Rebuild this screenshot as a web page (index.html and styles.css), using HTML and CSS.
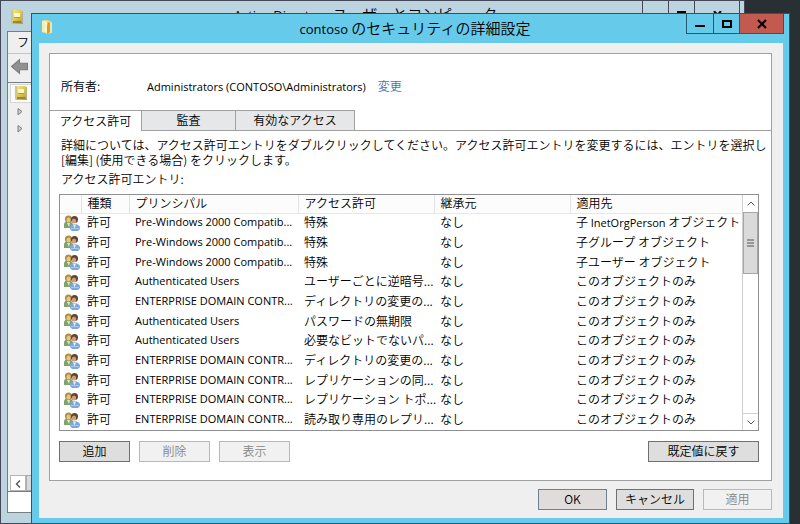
FILE: index.html
```html
<!DOCTYPE html>
<html lang="ja">
<head>
<meta charset="utf-8">
<title>contoso のセキュリティの詳細設定</title>
<link rel="stylesheet" href="styles.css">
</head>
<body>
<svg class="defs" aria-hidden="true">
  <defs>
    <linearGradient id="gold" x1="0" y1="0" x2="1" y2="1">
      <stop offset="0" stop-color="#f4eaa0"/><stop offset=".5" stop-color="#dcc84c"/><stop offset="1" stop-color="#b09c34"/>
    </linearGradient>
  </defs>
  <symbol id="book" viewBox="0 0 14 16">
    <path d="M1 1h10l2 1v13H2l-1-1z" fill="url(#gold)"/>
    <path d="M2 12h9l1 2H3z" fill="#9a8828"/>
    <path d="M1 1h2v13H1z" fill="#d3c67e"/>
    <path d="M4 4h6v4H4z" fill="#fbf6c8"/>
    <path d="M4 8h6v1H4z" fill="#b49e35"/>
    <path d="M12 2h1v12h-1z" fill="#b7b08a"/>
  </symbol>
  <symbol id="users" viewBox="0 0 16 16">
    <path d="M0 13V9q1-3 4-3t5 3v4z" fill="#7fa36a"/>
    <path d="M3 8h3l-1 4z" fill="#dfe8cf"/>
    <circle cx="4.500" cy="4" r="3.600" fill="#b08f3e"/>
    <ellipse cx="4.500" cy="5" rx="2" ry="2.500" fill="#e6c48e"/>
    <circle cx="10.500" cy="4.500" r="3.500" fill="#5d4436"/>
    <ellipse cx="10" cy="6" rx="2.200" ry="2.600" fill="#d59a78"/>
    <path d="M6 14v-2q1-3 4.500-3T16 12v2l-2 2H8z" fill="#7ea8dc"/>
    <path d="M9 9.500h3l-1.500 4z" fill="#e3eefa"/>
    <path d="M7 13h8v1H7z" fill="#a9c8ec"/>
  </symbol>
</svg>

<section class="window console">
  <header class="console-title">
    <svg class="console-icon"><use href="#book"/></svg>
    <span class="console-caption"><span class="latin">Active Directory</span> ユーザーとコンピューター</span>
    <div class="console-controls">
      <button aria-label="最小化"></button>
      <button aria-label="最大化"><svg viewBox="0 0 10 8"><path d="M1 1h7v6H1z" fill="none" stroke="#000" stroke-width="2"/></svg></button>
      <button aria-label="閉じる"><svg viewBox="0 0 10 8"><path d="M1 0l7 8M8 0L1 8" fill="none" stroke="#000" stroke-width="2"/></svg></button>
    </div>
  </header>
  <div class="console-body">
    <nav class="console-menu">ファイル(F)</nav>
    <div class="console-tools">
      <svg viewBox="0 0 16 16"><path d="M.5 8L8 1.500V5h7.500v6H8v3.500z" fill="#919191" stroke="#7b7b7b"/></svg>
    </div>
    <div class="console-tree">
      <div class="tree-root"><svg><use href="#book"/></svg></div>
      <div class="tree-item"><svg viewBox="0 0 6 8"><path d="M1 1l4 3-4 3.500z" fill="#ccc" stroke="#808080"/></svg></div>
      <div class="tree-item"><svg viewBox="0 0 6 8"><path d="M1 1l4 3-4 3.500z" fill="#ccc" stroke="#808080"/></svg></div>
    </div>
    <div class="console-scroll">
      <button aria-label="左へ"><svg viewBox="0 0 6 8"><path d="M5 .5L1.500 4 5 7.500" fill="none" stroke="#555" stroke-width="1.400"/></svg></button>
      <div class="console-thumb"></div>
    </div>
    <div class="console-status"></div>
  </div>
</section>

<main class="window dialog">
  <header class="title-bar">
    <svg class="folder" viewBox="0 0 10 16">
      <path d="M0 2l3-1v13l-3-1z" fill="#f6edb0"/>
      <path d="M3 1h3l4 2v11l-6 1-1-1z" fill="#ecd678"/>
      <path d="M6 3l2 1v9l-3 2V7z" fill="#d99a3c"/>
      <path d="M3 2l2 1v11l-2-1z" fill="#fff5c0"/>
      <path d="M8 4h2v10H8z" fill="#f3e6a4"/>
    </svg>
    <h1><span class="latin">contoso</span> のセキュリティの詳細設定</h1>
    <div class="controls">
      <button class="min" aria-label="最小化"><svg viewBox="0 0 10 10"><path d="M0 6h10v2H0z"/></svg></button>
      <button class="max" aria-label="最大化"><svg viewBox="0 0 10 10"><path d="M1 2h8v6H1z" fill="none" stroke="#000" stroke-width="2"/></svg></button>
      <button class="close" aria-label="閉じる"><svg viewBox="0 0 10 10"><path d="M1 1l8 8M9 1L1 9" fill="none" stroke="#000" stroke-width="2"/></svg></button>
    </div>
  </header>
  <div class="client">
    <div class="panel">
      <div class="owner">
        <span class="owner-label">所有者:</span>
        <span class="latin">Administrators (CONTOSO\Administrators)</span>
        <a href="#owner">変更</a>
      </div>
      <div class="tabs" role="tablist">
        <button class="tab active" role="tab" aria-selected="true">アクセス許可</button>
        <button class="tab audit" role="tab" aria-selected="false">監査</button>
        <button class="tab effective" role="tab" aria-selected="false">有効なアクセス</button>
        <div class="tab-rest"></div>
      </div>
      <div class="tab-page">
        <p class="hint">詳細については、アクセス許可エントリをダブルクリックしてください。アクセス許可エントリを変更するには、エントリを選択し<br>[編集] (使用できる場合) をクリックします。</p>
        <p class="list-label" id="entries">アクセス許可エントリ:</p>
        <div class="list">
          <table aria-labelledby="entries">
            <colgroup><col class="c-icon"><col class="c-type"><col class="c-name"><col class="c-access"><col class="c-from"><col></colgroup>
            <thead>
              <tr><th></th><th>種類</th><th>プリンシパル</th><th>アクセス許可</th><th>継承元</th><th>適用先</th></tr>
            </thead>
            <tbody>
              <tr><td><svg><use href="#users"/></svg></td><td>許可</td><td class="latin">Pre-Windows 2000 Compatib...</td><td>特殊</td><td>なし</td><td>子 <span class="latin">InetOrgPerson</span> オブジェクト</td></tr>
              <tr><td><svg><use href="#users"/></svg></td><td>許可</td><td class="latin">Pre-Windows 2000 Compatib...</td><td>特殊</td><td>なし</td><td>子グループ オブジェクト</td></tr>
              <tr><td><svg><use href="#users"/></svg></td><td>許可</td><td class="latin">Pre-Windows 2000 Compatib...</td><td>特殊</td><td>なし</td><td>子ユーザー オブジェクト</td></tr>
              <tr><td><svg><use href="#users"/></svg></td><td>許可</td><td class="latin">Authenticated Users</td><td>ユーザーごとに逆暗号...</td><td>なし</td><td>このオブジェクトのみ</td></tr>
              <tr><td><svg><use href="#users"/></svg></td><td>許可</td><td class="latin">ENTERPRISE DOMAIN CONTR...</td><td>ディレクトリの変更の...</td><td>なし</td><td>このオブジェクトのみ</td></tr>
              <tr><td><svg><use href="#users"/></svg></td><td>許可</td><td class="latin">Authenticated Users</td><td>パスワードの無期限</td><td>なし</td><td>このオブジェクトのみ</td></tr>
              <tr><td><svg><use href="#users"/></svg></td><td>許可</td><td class="latin">Authenticated Users</td><td>必要なビットでないパ...</td><td>なし</td><td>このオブジェクトのみ</td></tr>
              <tr><td><svg><use href="#users"/></svg></td><td>許可</td><td class="latin">ENTERPRISE DOMAIN CONTR...</td><td>ディレクトリの変更の...</td><td>なし</td><td>このオブジェクトのみ</td></tr>
              <tr><td><svg><use href="#users"/></svg></td><td>許可</td><td class="latin">ENTERPRISE DOMAIN CONTR...</td><td>レプリケーションの同...</td><td>なし</td><td>このオブジェクトのみ</td></tr>
              <tr><td><svg><use href="#users"/></svg></td><td>許可</td><td class="latin">ENTERPRISE DOMAIN CONTR...</td><td>レプリケーション トポ...</td><td>なし</td><td>このオブジェクトのみ</td></tr>
              <tr><td><svg><use href="#users"/></svg></td><td>許可</td><td class="latin">ENTERPRISE DOMAIN CONTR...</td><td>読み取り専用のレプリ...</td><td>なし</td><td>このオブジェクトのみ</td></tr>
            </tbody>
          </table>
          <div class="scrollbar">
            <button aria-label="上へ"><svg viewBox="0 0 8 5"><path d="M.5 4.500L4 1l3.500 3.500" fill="none" stroke="#555"/></svg></button>
            <div class="thumb"><svg viewBox="0 0 7 8"><path d="M0 1h7M0 4h7M0 7h7" stroke="#555"/></svg></div>
            <button class="down" aria-label="下へ"><svg viewBox="0 0 8 5"><path d="M.5 .5L4 4 7.500 .5" fill="none" stroke="#555"/></svg></button>
          </div>
        </div>
        <div class="actions">
          <button class="btn">追加</button>
          <button class="btn" disabled>削除</button>
          <button class="btn" disabled>表示</button>
          <button class="btn restore">既定値に戻す</button>
        </div>
      </div>
    </div>
    <footer class="footer">
      <button class="btn default">OK</button>
      <button class="btn cancel">キャンセル</button>
      <button class="btn" disabled>適用</button>
    </footer>
  </div>
</main>
</body>
</html>
```
FILE: styles.css
```css
* { box-sizing: border-box; }

body {
  margin: 0;
  min-height: 100vh;
  position: relative;
  overflow: hidden;
  background: #283034;
  color: #000;
  font: 350 12px/15px "Noto Sans CJK JP", sans-serif;
}

h1, p { margin: 0; font-weight: inherit; }
button { margin: 0; padding: 0; border: 0; background: none; font: inherit; color: inherit; }
svg { display: block; }
.defs { position: absolute; width: 0; height: 0; }

/* Latin runs sit one step smaller than the kana and kanji around them */
.latin { font-family: "Open Sans", sans-serif; font-size: 11px; font-weight: 400; }
h1 .latin, .console-caption .latin { font-size: 13px; }

.window { position: absolute; display: flex; flex-direction: column; }

/* Console window behind the dialog */
.console {
  inset: 0 55px 0 0;
  padding: 0 4px 10px 6px;
  background: #bbd4e0;
  border: 1px solid #454756;
}
.console-title { display: flex; align-items: flex-start; height: 30px; }
.console-icon { width: 14px; height: 16px; margin: 8px 0 0 3px; }
.console-caption { flex: 1; padding-left: 80px; text-align: center; font-size: 15px; line-height: 26px; white-space: nowrap; }
.console-controls { display: flex; height: 20px; border-left: 1px solid #454756; }
.console-controls button { width: 26px; padding: 7px 0 0 8px; border-right: 1px solid #454756; }
.console-controls button:last-child { width: 45px; padding-left: 18px; }
.console-controls svg { width: 10px; height: 8px; }
.console-body { flex: 1; display: flex; flex-direction: column; background: #efefef; border: 1px solid #777d85; }
.console-menu { height: 22px; padding: 2px 9px; border-bottom: 1px solid #c4c4c4; white-space: nowrap; }
.console-tools { height: 29px; padding: 4px 3px; border-bottom: 1px solid #777d85; }
.console-tools svg { width: 17px; height: 17px; }
.console-tree { flex: 1; }
.tree-root { height: 19px; margin: 1px 0 0 2px; padding: 0 3px; background: #fafafa; border: 1px solid #d5d5d5; }
.tree-root svg { width: 14px; height: 16px; }
.tree-item { height: 17px; padding: 4px 9px; }
.tree-item svg { width: 6px; height: 9px; }
.console-scroll { display: flex; height: 17px; padding-left: 2px; border-bottom: 1px solid #777d85; }
.console-scroll button { width: 16px; padding: 4px; background: #fff; border: 1px solid #b5b5b5; }
.console-scroll svg { width: 6px; height: 8px; }
.console-thumb { flex: 1; background: #dadada; border: 1px solid #aaa; }
.console-status { height: 20px; background: #fff; }

/* Dialog */
.dialog {
  inset: 13px 10px 0 31px;
  padding: 0 6px 5px 7px;
  background: #66caea;
  border: 1px solid #235b6c;
}
.title-bar { display: flex; align-items: flex-start; height: 29px; }
.folder { width: 10px; height: 16px; margin: 5px 0 0 3px; }
.title-bar h1 { flex: 1; padding-left: 92px; text-align: center; font-size: 15px; line-height: 28px; white-space: nowrap; }
.controls { display: flex; height: 20px; margin-right: -1px; }
.controls button { display: grid; place-items: center; width: 27px; border: 1px solid #235b6c; border-top: 0; border-right: 0; }
.controls svg { width: 10px; height: 10px; }
.controls .max { width: 26px; }
.controls .close { width: 45px; background: #c25a50; border-right: 1px solid #235b6c; }

.client { flex: 1; display: flex; flex-direction: column; padding: 10px 11px 8px 10px; background: #efefef; }
.panel { flex: 1; display: flex; flex-direction: column; background: #fff; border: 1px solid #a0a0a0; }
.owner { display: flex; align-items: baseline; height: 56px; padding: 24px 11px 0; white-space: nowrap; }
.owner-label { width: 86px; }
.owner a { margin-left: 12px; color: #4f749f; text-decoration: none; }

.tabs { display: flex; height: 21px; }
.tab { width: 91px; padding-bottom: 2px; border-top: 1px solid #a0a0a0; white-space: nowrap; }
.tab.audit { width: 94px; }
.tab.effective { width: 119px; }
.tab:not(.active) { background: #e6e7e9; border: 1px solid #a0a0a0; border-right: 0; }
.tab-rest { flex: 1; border-bottom: 1px solid #a0a0a0; border-left: 1px solid #a0a0a0; }

.tab-page { flex: 1; padding: 6px 12px 17px 9px; }
.hint { padding-left: 2px; white-space: nowrap; }
.list-label { padding: 4px 0 8px 2px; }

.list { display: flex; height: 237px; border: 1px solid #8e9094; }
table { flex: 1; width: 0; height: 235px; table-layout: fixed; border-collapse: collapse; }
.c-icon { width: 21px; }
.c-type { width: 48px; }
.c-name { width: 169px; }
.c-access, .c-from { width: 136px; }
th, td { padding: 0 0 2px 6px; text-align: left; font-weight: inherit; line-height: 14px; white-space: nowrap; }
td.latin { font-weight: 400; }
th { height: 18px; background: #fcfcfc; border-right: 1px solid #e3e3e3; border-bottom: 1px solid #e8e8e8; }
th:last-child { border-right: 0; }
td:first-child { padding: 0 0 1px 4px; }
td svg { width: 16px; height: 16px; }

.scrollbar { display: flex; flex-direction: column; width: 16px; border-left: 1px solid #d0d0d0; }
.scrollbar button, .thumb { display: grid; place-items: center; }
.scrollbar button { height: 17px; }
.scrollbar button svg { width: 8px; height: 5px; }
.scrollbar .down { margin-top: auto; border-top: 1px solid #d0d0d0; }
.thumb { height: 62px; background: #dadada; border: 1px solid #a6a6a6; }
.thumb svg { width: 7px; height: 8px; }

.actions { display: flex; gap: 9px; padding-top: 10px; }
.btn { width: 71px; height: 21px; padding-bottom: 2px; line-height: 17px; background: #dededf; border: 1px solid #707070; white-space: nowrap; }
.btn:disabled { background: #f1f1f1; border-color: #b8b8b8; color: #868686; }
.btn.default { background: #e1dcdc; border-color: #6c8090; }
.btn.restore { width: 111px; margin-left: auto; }
.footer { display: flex; justify-content: flex-end; gap: 9px; padding-top: 8px; }
.footer .btn { width: 69px; }
.footer .cancel { width: 78px; }
```
